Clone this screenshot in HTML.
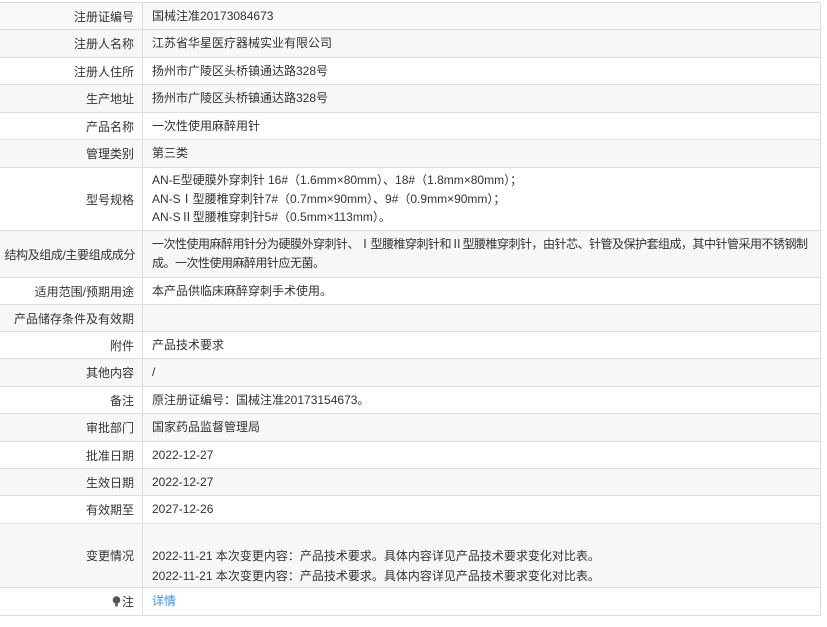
<!DOCTYPE html>
<html><head><meta charset="utf-8"><style>
*{margin:0;padding:0;box-sizing:border-box}
body{width:827px;height:627px;background:#fff;font-family:"Liberation Sans","Noto Sans CJK SC",sans-serif;font-size:12px;color:#333;position:relative;overflow:hidden}
.r{position:absolute;left:0;width:821px;border-top:1px solid #ddd;border-right:1px solid #ddd}
.g{background:#f7f7f7}
.b{background:#f7f9fb}
.l{position:absolute;left:0;top:0;bottom:0;width:143px;border-right:1px solid #ddd;display:flex;align-items:center;justify-content:flex-end;padding-right:8px;white-space:nowrap}
.v{position:absolute;left:152px;top:0;bottom:0;right:0;display:flex;align-items:center;line-height:19px;white-space:nowrap;overflow:hidden}
.last{border-bottom:1px solid #ddd}
a{color:#3f8ee8;text-decoration:none}
</style></head><body>
<div class="r b" style="top:2px;height:27px"><div class="l">注册证编号</div><div class="v">国械注准20173084673</div></div>
<div class="r g" style="top:29px;height:28px"><div class="l">注册人名称</div><div class="v">江苏省华星医疗器械实业有限公司</div></div>
<div class="r" style="top:57px;height:27px"><div class="l">注册人住所</div><div class="v">扬州市广陵区头桥镇通达路328号</div></div>
<div class="r g" style="top:84px;height:28px"><div class="l">生产地址</div><div class="v">扬州市广陵区头桥镇通达路328号</div></div>
<div class="r" style="top:112px;height:27px"><div class="l">产品名称</div><div class="v">一次性使用麻醉用针</div></div>
<div class="r g" style="top:139px;height:28px"><div class="l">管理类别</div><div class="v">第三类</div></div>
<div class="r" style="top:167px;height:63px"><div class="l">型号规格</div><div class="v" style="line-height:18.5px">AN-E型硬膜外穿刺针 16#（1.6mm×80mm）、18#（1.8mm×80mm）；<br>AN-SⅠ型腰椎穿刺针7#（0.7mm×90mm）、9#（0.9mm×90mm）；<br>AN-SⅡ型腰椎穿刺针5#（0.5mm×113mm）。</div></div>
<div class="r g" style="top:230px;height:47px"><div class="l" style="padding-right:7px;letter-spacing:-0.4px">结构及组成/主要组成成分</div><div class="v" style="letter-spacing:-0.5px">一次性使用麻醉用针分为硬膜外穿刺针、Ⅰ型腰椎穿刺针和Ⅱ型腰椎穿刺针，由针芯、针管及保护套组成，其中针管采用不锈钢制<br>成。一次性使用麻醉用针应无菌。</div></div>
<div class="r" style="top:277px;height:27px"><div class="l">适用范围/预期用途</div><div class="v">本产品供临床麻醉穿刺手术使用。</div></div>
<div class="r g" style="top:304px;height:27px"><div class="l">产品储存条件及有效期</div><div class="v"></div></div>
<div class="r" style="top:331px;height:27px"><div class="l">附件</div><div class="v">产品技术要求</div></div>
<div class="r g" style="top:358px;height:28px"><div class="l">其他内容</div><div class="v">/</div></div>
<div class="r" style="top:386px;height:27px"><div class="l">备注</div><div class="v">原注册证编号：国械注准20173154673。</div></div>
<div class="r g" style="top:413px;height:28px"><div class="l">审批部门</div><div class="v">国家药品监督管理局</div></div>
<div class="r" style="top:441px;height:27px"><div class="l">批准日期</div><div class="v">2022-12-27</div></div>
<div class="r g" style="top:468px;height:27px"><div class="l">生效日期</div><div class="v">2022-12-27</div></div>
<div class="r" style="top:495px;height:28px"><div class="l">有效期至</div><div class="v">2027-12-26</div></div>
<div class="r g" style="top:523px;height:64px"><div class="l">变更情况</div><div class="v" style="align-items:flex-start;padding-top:22px;line-height:20px">2022-11-21 本次变更内容：产品技术要求。具体内容详见产品技术要求变化对比表。<br>2022-11-21 本次变更内容：产品技术要求。具体内容详见产品技术要求变化对比表。</div></div>
<div class="r last" style="top:587px;height:29px"><div class="l"><svg width="9" height="11" viewBox="0 0 9 11" style="margin-right:1px"><circle cx="4.5" cy="4" r="3.8" fill="#555"/><rect x="3" y="7.5" width="3" height="3" fill="#777"/></svg>注</div><div class="v"><a>详情</a></div></div>
</body></html>
